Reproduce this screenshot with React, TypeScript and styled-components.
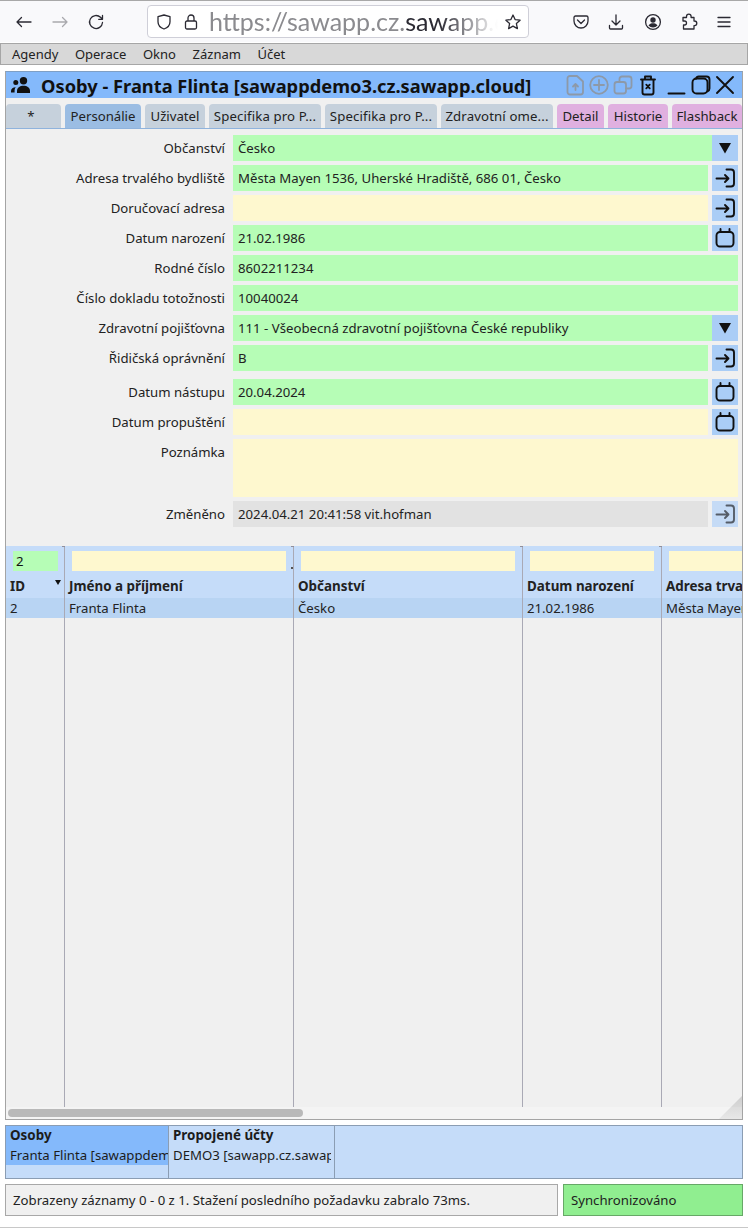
import styled, { createGlobalStyle } from 'styled-components'

type FieldTone = 'green' | 'yellow' | 'gray'
type Action = 'combo' | 'link' | 'date'

type FormRow = {
  label: string
  value?: string
  tone: FieldTone
  action?: Action
  tall?: boolean
  spaced?: boolean
  muted?: boolean
}

const formRows: FormRow[] = [
  { label: 'Občanství', value: 'Česko', tone: 'green', action: 'combo' },
  { label: 'Adresa trvalého bydliště', value: 'Města Mayen 1536, Uherské Hradiště, 686 01, Česko', tone: 'green', action: 'link' },
  { label: 'Doručovací adresa', tone: 'yellow', action: 'link' },
  { label: 'Datum narození', value: '21.02.1986', tone: 'green', action: 'date' },
  { label: 'Rodné číslo', value: '8602211234', tone: 'green' },
  { label: 'Číslo dokladu totožnosti', value: '10040024', tone: 'green' },
  { label: 'Zdravotní pojišťovna', value: '111 - Všeobecná zdravotní pojišťovna České republiky', tone: 'green', action: 'combo' },
  { label: 'Řidičská oprávnění', value: 'B', tone: 'green', action: 'link' },
  { label: 'Datum nástupu', value: '20.04.2024', tone: 'green', action: 'date', spaced: true },
  { label: 'Datum propuštění', tone: 'yellow', action: 'date' },
  { label: 'Poznámka', tone: 'yellow', tall: true },
  { label: 'Změněno', value: '2024.04.21 20:41:58 vit.hofman', tone: 'gray', action: 'link', muted: true },
]

const tabs = [
  { label: '*', width: 55, kind: 'plain', inset: 5 },
  { label: 'Personálie', width: 76, kind: 'active' },
  { label: 'Uživatel', width: 60, kind: 'plain' },
  { label: 'Specifika pro P...', width: 112, kind: 'plain', loose: true },
  { label: 'Specifika pro P...', width: 112, kind: 'plain', loose: true },
  { label: 'Zdravotní ome...', width: 112, kind: 'plain', loose: true },
  { label: 'Detail', width: 47, kind: 'pink' },
  { label: 'Historie', width: 60, kind: 'pink' },
  { label: 'Flashback', width: 70, kind: 'pink' },
]

const columns = [
  { title: 'ID', value: '2', width: 59, filterWidth: 45, filter: '2', sorted: true },
  { title: 'Jméno a příjmení', value: 'Franta Flinta', width: 229, filterWidth: 214, dot: true },
  { title: 'Občanství', value: 'Česko', width: 229, filterWidth: 214 },
  { title: 'Datum narození', value: '21.02.1986', width: 139, filterWidth: 124 },
  { title: 'Adresa trvalého bydliště', value: 'Města Mayen 1536', width: 240, filterWidth: 224 },
]

const toneColors: Record<FieldTone, string> = {
  green: '#b6fdb6',
  yellow: '#fef8cf',
  gray: '#e2e2e2',
}

const tabColors: Record<string, string> = {
  plain: '#c6d1dc',
  active: '#9bbde3',
  pink: '#e0b0e0',
}

const GlobalStyle = createGlobalStyle`
  html,
  body {
    margin: 0;
    padding: 0;
    background: #fff;
  }
  body {
    font-family: 'Noto Sans', 'Open Sans', sans-serif;
    font-size: 13.2px;
    color: #111;
  }
`

const Page = styled.div`
  width: 748px;
  height: 1228px;
  box-sizing: border-box;
  display: flex;
  flex-direction: column;
  overflow: hidden;
  border-top: 1px solid #a8a8a8;
  border-bottom: 1px solid #c8c8c8;
  background: #fff;
`

const BrowserBar = styled.div`
  height: 41px;
  flex: none;
  display: flex;
  align-items: center;
  background: #f9f9fb;
  box-sizing: border-box;
`

const NavIcon = styled.svg<{ $left: number; $off?: boolean }>`
  flex: none;
  width: 18px;
  height: 18px;
  margin-left: ${(p) => p.$left}px;
  fill: none;
  stroke: ${(p) => (p.$off ? '#a9a9ad' : '#2b2a33')};
  stroke-width: 1.3;
  stroke-linecap: round;
  stroke-linejoin: round;
`

const UrlBar = styled.div`
  width: 382px;
  height: 33px;
  flex: none;
  margin-left: 42px;
  box-sizing: border-box;
  display: flex;
  align-items: center;
  background: #fff;
  border: 1px solid #cfcfd8;
  border-radius: 4px;
  padding: 0 6px 0 8px;
`

const UrlGlyph = styled.svg<{ $left?: number }>`
  flex: none;
  margin-left: ${(p) => p.$left ?? 0}px;
  fill: none;
  stroke: #2b2a33;
  stroke-width: 1.3;
  stroke-linejoin: round;
`

const UrlText = styled.div`
  flex: 1;
  min-width: 0;
  margin-left: 11px;
  overflow: hidden;
  white-space: nowrap;
  font-family: 'Lato', 'Noto Sans', sans-serif;
  font-size: 25px;
  line-height: 31px;
  color: #8b8b8f;
  -webkit-mask-image: linear-gradient(90deg, #000 78%, transparent 98%);
  mask-image: linear-gradient(90deg, #000 78%, transparent 98%);
  span {
    color: #2b2a33;
  }
`

const AccountIcon = styled.svg`
  flex: none;
  margin-left: 19px;
`

const MenuBar = styled.div`
  height: 22px;
  flex: none;
  box-sizing: border-box;
  display: flex;
  align-items: center;
  gap: 16.6px;
  padding: 0 0 0 11px;
  margin-top: 1px;
  background: #d8d8d8;
  border: 1px solid #a6a6a6;
  font-size: 13px;
  color: #222;
`

const Window = styled.div`
  position: relative;
  margin: 6px 5px 0 5px;
  height: 1049px;
  flex: none;
  box-sizing: border-box;
  display: flex;
  flex-direction: column;
  overflow: hidden;
  background: #f0f0f0;
  border: 1px solid #a4a4a4;
  border-top-color: #7f9fc4;
`

const TitleBar = styled.div`
  height: 26px;
  flex: none;
  display: flex;
  align-items: center;
  background: #84b9fb;
  padding-left: 5px;
`

const Title = styled.div`
  flex: 1;
  margin-left: 10px;
  font-size: 18.3px;
  font-weight: 700;
  white-space: nowrap;
  color: #111;
`

const PeopleIcon = styled.svg`
  flex: none;
  width: 20px;
  height: 16px;
  fill: #111;
`

const TitleIcon = styled.svg<{ $faded?: boolean; $left?: number }>`
  flex: none;
  width: 20px;
  height: 22px;
  margin-left: ${(p) => p.$left ?? 0}px;
  fill: none;
  stroke: ${(p) => (p.$faded ? '#8d99a8' : '#111')};
  stroke-width: ${(p) => (p.$faded ? 1.8 : 1.9)};
  stroke-linejoin: round;
  stroke-linecap: round;
`

const TitleTools = styled.div`
  display: flex;
  align-items: center;
  gap: 4px;
  margin-right: 7px;
`

const TabStrip = styled.div`
  height: 31px;
  flex: none;
  box-sizing: border-box;
  display: flex;
  align-items: flex-end;
  gap: 4px;
  border-bottom: 1px solid #8fb3dd;
`

const Tab = styled.div<{ $kind: string; $width: number; $inset?: number; $loose?: boolean }>`
  flex: none;
  width: ${(p) => p.$width}px;
  height: 24px;
  box-sizing: border-box;
  padding-right: ${(p) => p.$inset ?? 0}px;
  line-height: 24px;
  text-align: center;
  white-space: nowrap;
  letter-spacing: ${(p) => (p.$loose ? 0.14 : 0)}px;
  border-radius: 4px 4px 0 0;
  color: #222;
  background: ${(p) => tabColors[p.$kind]};
`

const Form = styled.div`
  flex: none;
  height: 417px;
  box-sizing: border-box;
  padding: 6px 4px 0 0;
  display: flex;
  flex-direction: column;
  gap: 4px;
`

const Row = styled.div<{ $spaced?: boolean }>`
  display: flex;
  align-items: flex-start;
  margin-top: ${(p) => (p.$spaced ? 4 : 0)}px;
`

const Label = styled.div`
  flex: none;
  width: 219px;
  margin-right: 8px;
  height: 26px;
  line-height: 26px;
  text-align: right;
  white-space: nowrap;
  color: #222;
`

const Field = styled.div<{ $tone: FieldTone; $tall?: boolean; $gap: number }>`
  flex: 1;
  min-width: 0;
  height: ${(p) => (p.$tall ? 58 : 26)}px;
  line-height: 26px;
  box-sizing: border-box;
  padding-left: 5px;
  margin-right: ${(p) => p.$gap}px;
  background: ${(p) => toneColors[p.$tone]};
  white-space: nowrap;
  color: #222;
`

const ActionButton = styled.div<{ $muted?: boolean }>`
  flex: none;
  width: 26px;
  height: 26px;
  display: flex;
  align-items: center;
  justify-content: center;
  background: ${(p) => (p.$muted ? '#c5dbf6' : '#aacdf6')};
`

const ActionIcon = styled.svg<{ $muted?: boolean }>`
  width: 22px;
  height: 22px;
  fill: none;
  stroke: ${(p) => (p.$muted ? '#555d68' : '#111')};
  stroke-width: 1.9;
  stroke-linejoin: round;
  stroke-linecap: round;
`

const Grid = styled.div`
  flex: 1;
  min-height: 0;
  display: flex;
  overflow: hidden;
`

const Column = styled.div<{ $width: number }>`
  position: relative;
  flex: none;
  width: ${(p) => p.$width}px;
  box-sizing: border-box;
  display: flex;
  flex-direction: column;
  border-right: 1px solid #a9a9b5;
`

const FilterCell = styled.div`
  height: 30px;
  flex: none;
  box-sizing: border-box;
  padding-top: 5px;
  background: #c5dcf9;
`

const FilterInput = styled.div<{ $width: number; $filled?: boolean }>`
  width: ${(p) => p.$width}px;
  height: 20px;
  line-height: 20px;
  margin-left: 7px;
  box-sizing: border-box;
  padding-left: 3px;
  background: ${(p) => (p.$filled ? '#b6fdb6' : '#fef8cf')};
`

const HeaderCell = styled.div`
  position: relative;
  height: 22px;
  flex: none;
  line-height: 21px;
  padding-left: 4px;
  font-size: 13.4px;
  font-weight: 700;
  white-space: nowrap;
  overflow: hidden;
  background: #c5dcf9;
  color: #222;
`

const SortMark = styled.div`
  position: absolute;
  right: 3px;
  top: 4px;
  width: 0;
  height: 0;
  border-left: 3.5px solid transparent;
  border-right: 3.5px solid transparent;
  border-top: 5px solid #111;
`

const ValueCell = styled.div`
  height: 20px;
  flex: none;
  line-height: 20px;
  padding-left: 4px;
  white-space: nowrap;
  overflow: hidden;
  background: #b8d4f3;
  color: #222;
`

const ColumnTick = styled.div`
  position: absolute;
  right: -3px;
  top: 0;
  width: 5px;
  height: 1px;
  background: #8f8f9c;
`

const FilterDot = styled.div`
  position: absolute;
  right: 0;
  top: 21px;
  width: 2px;
  height: 2px;
  background: #555;
`

const ScrollTrack = styled.div`
  flex: none;
  height: 12px;
  box-sizing: border-box;
  padding: 2px 0 0 2px;
  background: #f4f4f4;
`

const ScrollThumb = styled.div`
  width: 295px;
  height: 8px;
  border-radius: 4px;
  background: #b9b9b9;
`

const Resizer = styled.div`
  position: absolute;
  right: 0;
  bottom: 0;
  width: 23px;
  height: 23px;
  clip-path: polygon(100% 0, 100% 100%, 0 100%);
  background: linear-gradient(180deg, rgba(0, 0, 0, 0.14), rgba(0, 0, 0, 0.05));
`

const Bottom = styled.div`
  margin: 5px 5px 0 5px;
  height: 54px;
  flex: none;
  box-sizing: border-box;
  display: flex;
  background: #c5dcf9;
  border: 1px solid #8b9db3;
`

const Pane = styled.div<{ $width: number; $active?: boolean }>`
  flex: none;
  width: ${(p) => p.$width}px;
  box-sizing: border-box;
  padding-right: ${(p) => (p.$active ? 0 : 3)}px;
  border-right: 1px solid #8b9db3;
  white-space: nowrap;
  overflow: hidden;
`

const PaneTitle = styled.div<{ $active?: boolean }>`
  height: 19px;
  line-height: 18px;
  padding-left: 4px;
  font-size: 13.4px;
  font-weight: 700;
  color: #1c1c1c;
  background: ${(p) => (p.$active ? '#84b9fb' : 'transparent')};
`

const PaneText = styled.div<{ $active?: boolean }>`
  height: 20px;
  line-height: 20px;
  padding-left: 4px;
  overflow: hidden;
  color: #1c1c1c;
  background: ${(p) => (p.$active ? '#84b9fb' : 'transparent')};
`

const StatusBar = styled.div`
  margin: 5px 5px 0 5px;
  height: 32px;
  flex: none;
  display: flex;
  gap: 5px;
`

const StatusBox = styled.div<{ $ok?: boolean }>`
  flex: ${(p) => (p.$ok ? '0 0 180px' : '1')};
  box-sizing: border-box;
  line-height: 30px;
  padding-left: 7px;
  white-space: nowrap;
  color: #222;
  background: ${(p) => (p.$ok ? '#90ee90' : '#f0f0f0')};
  border: 1px solid ${(p) => (p.$ok ? '#67a867' : '#a8a8a8')};
`

const ActionGlyph = ({ action, muted }: { action: Action; muted?: boolean }) => {
  if (action === 'combo') {
    return (
      <svg width="12" height="11" viewBox="0 0 12 11">
        <path d="M0 0h12L6 10.500z" fill="#111" />
      </svg>
    )
  }
  if (action === 'link') {
    return (
      <ActionIcon viewBox="0 0 22 22" $muted={muted}>
        <path d="M2.500 11.500h12M11 8l3.500 3.500L11 15" />
        <path d="M12.500 2.500H17a3 3 0 0 1 3 3v11a3 3 0 0 1-3 3h-4.500" />
      </ActionIcon>
    )
  }
  return (
    <ActionIcon viewBox="0 0 22 22">
      <rect x="2.500" y="5" width="17" height="14.500" rx="3.500" />
      <path d="M6.500 2v3M15.500 2v3" />
    </ActionIcon>
  )
}

export default function App() {
  return (
    <Page>
      <GlobalStyle />
      <BrowserBar>
        <NavIcon viewBox="0 0 18 18" $left={15}>
          <path d="M16 9H2M6.500 4.500 2 9l4.500 4.500" />
        </NavIcon>
        <NavIcon viewBox="0 0 18 18" $left={18} $off>
          <path d="M2 9h14M11.500 4.500 16 9l-4.500 4.500" />
        </NavIcon>
        <NavIcon viewBox="0 0 18 18" $left={18}>
          <path d="M15.500 9.500A6.500 6.500 0 1 1 13.500 4.300L15.500 6.300M15.500 2.500v3.800h-3.800" />
        </NavIcon>
        <UrlBar>
          <UrlGlyph width="16" height="18" viewBox="0 0 16 18">
            <path d="M8 2 2 3.600v5.200C2 12.500 5 15 8 16c3-1 6-3.500 6-7.200V3.600z" />
          </UrlGlyph>
          <UrlGlyph $left={12} width="14" height="18" viewBox="0 0 14 18">
            <rect x="1.500" y="8" width="11" height="8" rx="1.500" />
            <path d="M4 8V5a3 3 0 0 1 6 0v3" />
          </UrlGlyph>
          <UrlText>
            https://sawapp.cz.<span>sawapp</span>.cloud/app
          </UrlText>
          <UrlGlyph width="18" height="18" viewBox="0 0 18 18">
            <path d="m9 2 2.100 4.600 5 .6-3.700 3.400 1 5L9 13.100l-4.400 2.500 1-5L1.900 7.200l5-.6z" />
          </UrlGlyph>
        </UrlBar>
        <NavIcon viewBox="0 0 18 18" $left={43}>
          <path d="M3.500 3h11A1.500 1.500 0 0 1 16 4.500V8A7 7 0 0 1 2 8V4.500A1.500 1.500 0 0 1 3.500 3z" />
          <path d="M5.500 7 9 10.500 12.500 7" />
        </NavIcon>
        <NavIcon viewBox="0 0 18 18" $left={17}>
          <path d="M9 2v10M5 8l4 4 4-4M2.500 12.500V15a1 1 0 0 0 1 1h11a1 1 0 0 0 1-1v-2.500" />
        </NavIcon>
        <AccountIcon width="18" height="18" viewBox="0 0 18 18">
          <circle cx="9" cy="9" r="7.400" fill="none" stroke="#2b2a33" strokeWidth="1.300" />
          <circle cx="9" cy="7" r="2.700" fill="#2b2a33" />
          <path d="M4.500 12.500c1-1.600 2.500-2.200 4.500-2.200s3.500.6 4.500 2.200A6 6 0 0 1 9 14.500a6 6 0 0 1-4.500-2z" fill="#2b2a33" />
        </AccountIcon>
        <NavIcon viewBox="0 0 18 18" $left={18}>
          <path d="M6.500 4.500v-1a2.300 2.300 0 0 1 4.600 0v1H14V8h.5a2.300 2.300 0 0 1 0 4.600H14V16H3.500v-4H4.500a2 2 0 0 0 0-4H3V4.500z" />
        </NavIcon>
        <NavIcon viewBox="0 0 18 18" $left={17}>
          <path d="M3 4.500h12M3 9h12M3 13.500h12" />
        </NavIcon>
      </BrowserBar>
      <MenuBar>
        <span>Agendy</span>
        <span>Operace</span>
        <span>Okno</span>
        <span>Záznam</span>
        <span>Účet</span>
      </MenuBar>
      <Window>
        <TitleBar>
          <PeopleIcon viewBox="0 0 20 16">
            <circle cx="12.500" cy="3.800" r="3.700" />
            <path d="M6 16v-2.200c0-3 3-5 6.500-5s6.500 2 6.500 5V16z" />
            <circle cx="4.800" cy="5.600" r="2.500" />
            <path d="M0 15.500V14c0-2.500 2-3.800 4.800-3.800C3.500 11.300 3.600 13.500 3.600 15.500z" />
          </PeopleIcon>
          <Title>Osoby - Franta Flinta [sawappdemo3.cz.sawapp.cloud]</Title>
          <TitleTools>
            <TitleIcon viewBox="0 0 20 22" $faded>
              <path d="M5 2h7l6 5.500V18a2.500 2.500 0 0 1-2.500 2.500h-10.500A2.500 2.500 0 0 1 2.500 18V4.500A2.500 2.500 0 0 1 5 2zM10.500 16v-6M8 12.500l2.500-2.500 2.500 2.500" />
            </TitleIcon>
            <TitleIcon viewBox="0 0 20 22" $faded>
              <circle cx="10" cy="11" r="8.800" />
              <path d="M10 6v10M5 11h10" />
            </TitleIcon>
            <TitleIcon viewBox="0 0 20 22" $faded>
              <rect x="1.500" y="8" width="11.500" height="11.500" rx="2.500" />
              <path d="M6.500 8V5a2.500 2.500 0 0 1 2.500-2.500h7A2.500 2.500 0 0 1 18.500 5v7a2.500 2.500 0 0 1-2.500 2.500h-3" />
            </TitleIcon>
            <TitleIcon viewBox="0 0 20 22" $left={1}>
              <path d="M3 5.500h14M7 5.500V2.500h6v3M4.500 5.500V18.500a2 2 0 0 0 2 2h7a2 2 0 0 0 2-2V5.500M8.300 10.700l3.400 3.600M11.700 10.700l-3.400 3.600" />
            </TitleIcon>
            <TitleIcon viewBox="0 0 20 22" $left={5}>
              <path d="M1.500 19.500h16" />
            </TitleIcon>
            <TitleIcon viewBox="0 0 20 22">
              <path d="M5 4.800a3 3 0 0 1 2.800-2.300h7.700a3 3 0 0 1 3 3v9a3 3 0 0 1-2 2.800" />
              <rect x="1.500" y="4.500" width="15" height="15" rx="4" />
            </TitleIcon>
            <TitleIcon viewBox="0 0 20 22">
              <path d="M2 3l16 16M18 3 2 19" />
            </TitleIcon>
          </TitleTools>
        </TitleBar>
        <TabStrip>
          {tabs.map((tab, i) => (
            <Tab key={i} $kind={tab.kind} $width={tab.width} $inset={tab.inset} $loose={tab.loose}>
              {tab.label}
            </Tab>
          ))}
        </TabStrip>
        <Form>
          {formRows.map((row) => (
            <Row key={row.label} $spaced={row.spaced}>
              <Label>{row.label}</Label>
              <Field $tone={row.tone} $tall={row.tall} $gap={row.action === 'combo' ? 0 : row.action ? 4 : 0}>
                {row.value}
              </Field>
              {row.action && (
                <ActionButton $muted={row.muted}>
                  <ActionGlyph action={row.action} muted={row.muted} />
                </ActionButton>
              )}
            </Row>
          ))}
        </Form>
        <Grid>
          {columns.map((col) => (
            <Column key={col.title} $width={col.width}>
              <ColumnTick />
              {col.dot && <FilterDot />}
              <FilterCell>
                <FilterInput $width={col.filterWidth} $filled={!!col.filter}>
                  {col.filter}
                </FilterInput>
              </FilterCell>
              <HeaderCell>
                {col.title}
                {col.sorted && <SortMark />}
              </HeaderCell>
              <ValueCell>{col.value}</ValueCell>
            </Column>
          ))}
        </Grid>
        <ScrollTrack>
          <ScrollThumb />
        </ScrollTrack>
        <Resizer />
      </Window>
      <Bottom>
        <Pane $width={163} $active>
          <PaneTitle $active>Osoby</PaneTitle>
          <PaneText $active>Franta Flinta [sawappdem</PaneText>
        </Pane>
        <Pane $width={166}>
          <PaneTitle>Propojené účty</PaneTitle>
          <PaneText>DEMO3 [sawapp.cz.sawap</PaneText>
        </Pane>
      </Bottom>
      <StatusBar>
        <StatusBox>Zobrazeny záznamy 0 - 0 z 1. Stažení posledního požadavku zabralo 73ms.</StatusBox>
        <StatusBox $ok>Synchronizováno</StatusBox>
      </StatusBar>
    </Page>
  )
}
